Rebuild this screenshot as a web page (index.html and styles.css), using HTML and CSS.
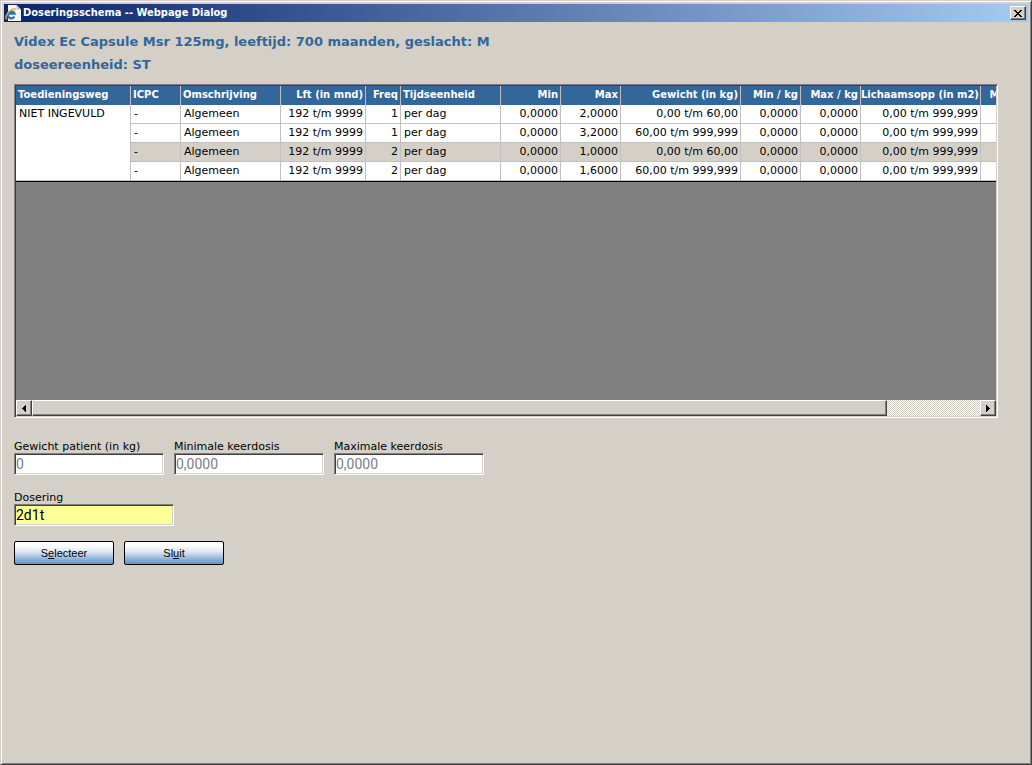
FILE: index.html
```html
<!DOCTYPE html>
<html lang="nl">
<head>
<meta charset="utf-8">
<title>Doseringsschema</title>
<link rel="stylesheet" href="styles.css">
</head>
<body>
<div class="window">
  <header class="titlebar">
    <svg class="app-icon" width="16" height="16" viewBox="0 0 16 16" aria-hidden="true">
      <path d="M3 0h8.500L16 4.500V16H3z" fill="#f6f4ee"/>
      <path d="M11.500 0v4.500H16z" fill="#b9c4d6"/>
      <path d="M9.300 11.600A3.500 3.500 0 1 1 9.600 8.700H3.800" fill="none" stroke="#1c78c8" stroke-width="2.200"/>
      <path d="M2.200 14C-.8 14.200 1.500 8 5.500 5.200C8.500 3 11 3 10.200 5.400" fill="none" stroke="#e8b425" stroke-width="1.300"/>
    </svg>
    <span class="titlebar-text">Doseringsschema -- Webpage Dialog</span>
    <button class="close" type="button" aria-label="Sluiten">
      <svg width="8" height="7" viewBox="0 0 8 7" shape-rendering="crispEdges" aria-hidden="true"><path d="M0 0h2v1h1v1h2V1h1V0h2v1H7v1H6v1H5v1h1v1h1v1h1v1H6V6H5V5H3v1H2v1H0V6h1V5h1V4h1V3H2V2H1V1H0z" fill="#000"/></svg>
    </button>
  </header>
  <main class="content">
    <h1 class="heading">Videx Ec Capsule Msr 125mg, leeftijd: 700 maanden, geslacht: M<br>doseereenheid: ST</h1>
    <section class="grid-box">
      <div class="grid-view">
        <table class="grid">
          <colgroup>
            <col class="w115"><col class="w50"><col class="w100"><col class="w85"><col class="w35"><col class="w100"><col class="w60"><col class="w60"><col class="w120"><col class="w60"><col class="w60"><col class="w120"><col class="w60"><col class="w60">
          </colgroup>
          <thead>
            <tr><th>Toedieningsweg</th><th>ICPC</th><th>Omschrijving</th><th class="num">Lft (in mnd)</th><th class="num">Freq</th><th>Tijdseenheid</th><th class="num">Min</th><th class="num">Max</th><th class="num">Gewicht (in kg)</th><th class="num">Min / kg</th><th class="num">Max / kg</th><th class="num">Lichaamsopp (in m2)</th><th class="num">Min / m2</th><th class="num">Max / m2</th></tr>
          </thead>
          <tbody>
            <tr><td rowspan="4" class="route">NIET INGEVULD</td><td>-</td><td>Algemeen</td><td class="num">192 t/m 9999</td><td class="num">1</td><td>per dag</td><td class="num">0,0000</td><td class="num">2,0000</td><td class="num">0,00 t/m 60,00</td><td class="num">0,0000</td><td class="num">0,0000</td><td class="num">0,00 t/m 999,999</td><td></td><td></td></tr>
            <tr><td>-</td><td>Algemeen</td><td class="num">192 t/m 9999</td><td class="num">1</td><td>per dag</td><td class="num">0,0000</td><td class="num">3,2000</td><td class="num">60,00 t/m 999,999</td><td class="num">0,0000</td><td class="num">0,0000</td><td class="num">0,00 t/m 999,999</td><td></td><td></td></tr>
            <tr class="selected"><td>-</td><td>Algemeen</td><td class="num">192 t/m 9999</td><td class="num">2</td><td>per dag</td><td class="num">0,0000</td><td class="num">1,0000</td><td class="num">0,00 t/m 60,00</td><td class="num">0,0000</td><td class="num">0,0000</td><td class="num">0,00 t/m 999,999</td><td></td><td></td></tr>
            <tr><td>-</td><td>Algemeen</td><td class="num">192 t/m 9999</td><td class="num">2</td><td>per dag</td><td class="num">0,0000</td><td class="num">1,6000</td><td class="num">60,00 t/m 999,999</td><td class="num">0,0000</td><td class="num">0,0000</td><td class="num">0,00 t/m 999,999</td><td></td><td></td></tr>
          </tbody>
        </table>
      </div>
      <div class="scrollbar">
        <button class="arrow" type="button" aria-label="Naar links"><svg width="4" height="7" viewBox="0 0 4 7" shape-rendering="crispEdges" aria-hidden="true"><path d="M4 0v7H3V6H2V5H1V4H0V3h1V2h1V1h1V0z"/></svg></button>
        <div class="track"><div class="thumb"></div></div>
        <button class="arrow" type="button" aria-label="Naar rechts"><svg width="4" height="7" viewBox="0 0 4 7" shape-rendering="crispEdges" aria-hidden="true"><path d="M0 0v7h1V6h1V5h1V4h1V3H3V2H2V1H1V0z"/></svg></button>
      </div>
    </section>
    <form class="form">
      <div class="fields">
        <div class="field"><label for="weight">Gewicht patient (in kg)</label><input class="box" id="weight" type="text" value="0" disabled></div>
        <div class="field"><label for="min">Minimale keerdosis</label><input class="box" id="min" type="text" value="0,0000" disabled></div>
        <div class="field"><label for="max">Maximale keerdosis</label><input class="box" id="max" type="text" value="0,0000" disabled></div>
      </div>
      <div class="field dose"><label for="dose">Dosering</label><input class="box box-active" id="dose" type="text" value="2d1t"></div>
      <div class="actions">
        <button class="action" type="button">S<u>e</u>lecteer</button>
        <button class="action" type="button">Sl<u>u</u>it</button>
      </div>
    </form>
  </main>
</div>
</body>
</html>
```

FILE: styles.css
```css
* { box-sizing: border-box; }
body {
  margin: 0;
  background: #d4d0c8;
  color: #000;
  font-family: Verdana, "DejaVu Sans", sans-serif;
  font-size: 11px;
}
button { margin: 0; padding: 0; }
.window {
  min-height: 100vh;
  padding: 2px;
  border: 1px solid;
  border-color: #d4d0c8 #404040 #404040 #d4d0c8;
  box-shadow: inset 1px 1px #fff, inset -1px -1px #808080;
}
.titlebar {
  display: flex;
  align-items: center;
  gap: 2px;
  height: 18px;
  margin: 1px;
  padding: 0 2px 0 1px;
  background: linear-gradient(90deg, #0a246a, #a6caf0);
  color: #fff;
  font: bold 11px/18px Tahoma, "DejaVu Sans Condensed", "DejaVu Sans", sans-serif;
}
.app-icon { flex: none; }
.titlebar-text { flex: 1; }
.close, .arrow {
  display: flex;
  align-items: center;
  justify-content: center;
  width: 16px;
  border: 1px solid;
  border-color: #fff #404040 #404040 #fff;
  background: #d4d0c8;
  box-shadow: inset -1px -1px #808080;
}
.close { height: 14px; }
.content { padding: 7px 31px 8px 11px; }
.heading {
  margin: 0 0 8px;
  color: #336699;
  font-size: 13px;
  line-height: 23px;
}
.grid-box {
  display: flex;
  flex-direction: column;
  height: 334px;
  border: 1px solid;
  border-color: #808080 #fff #fff #808080;
  background: #808080;
  box-shadow: inset 1px 1px #404040, inset -1px -1px #d4d0c8;
  padding: 1px;
}
.grid-view { flex: 1; overflow: hidden; }
.grid {
  table-layout: fixed;
  width: 1085px;
  border-collapse: separate;
  border-spacing: 0;
  border-bottom: 1px solid #000;
  background: #fff;
}
.w35 { width: 35px; }
.w50 { width: 50px; }
.w60 { width: 60px; }
.w85 { width: 85px; }
.w100 { width: 100px; }
.w115 { width: 115px; }
.w120 { width: 120px; }
.grid th, .grid td {
  height: 19px;
  padding: 0 2px 0 3px;
  border-right: 1px solid #c0c0c0;
  border-bottom: 1px solid #c0c0c0;
  line-height: 18px;
  text-align: left;
  white-space: nowrap;
}
.grid th {
  padding: 0 2px 1px;
  border-bottom: 0;
  background: #336699;
  color: #fff;
  font-size: 10px;
}
.grid .num { padding-left: 0; text-align: right; }
.grid .route { vertical-align: top; }
.selected td { background: #d4d0c8; }
.scrollbar { display: flex; height: 16px; }
.arrow { flex: none; height: 16px; }
.track {
  flex: 1;
  background: repeating-conic-gradient(#fff 0 25%, #d4d0c8 0 50%) 0 0 / 2px 2px;
}
.thumb {
  width: 90.2%;
  height: 16px;
  border: 1px solid;
  border-color: #fff #404040 #404040 #fff;
  background: #d4d0c8;
  box-shadow: inset -1px -1px #808080;
}
.form { margin-top: 22px; }
.fields { display: flex; gap: 10px; }
.field { display: flex; flex-direction: column; width: 150px; }
.field label { line-height: 13px; }
.box {
  width: 100%;
  height: 22px;
  padding: 0 1px;
  border: 1px solid;
  border-color: #808080 #fff #fff #808080;
  border-radius: 0;
  background: #fff;
  box-shadow: inset 1px 1px #404040, inset -1px -1px #d4d0c8;
  color: #000;
  font: 14px "Roboto", "Liberation Sans", sans-serif;
}
.box:disabled { color: #808080; }
.dose { width: 160px; margin-top: 16px; }
.box-active { background: #ffff99; }
.actions { display: flex; gap: 10px; margin-top: 15px; }
.action {
  width: 100px;
  height: 24px;
  border: 1px solid #000;
  border-radius: 2px;
  background: linear-gradient(#fff 15%, #dce5f1 45%, #6699cc 95%);
  color: #000;
  font: 11px "Liberation Sans", Arial, sans-serif;
}
```
